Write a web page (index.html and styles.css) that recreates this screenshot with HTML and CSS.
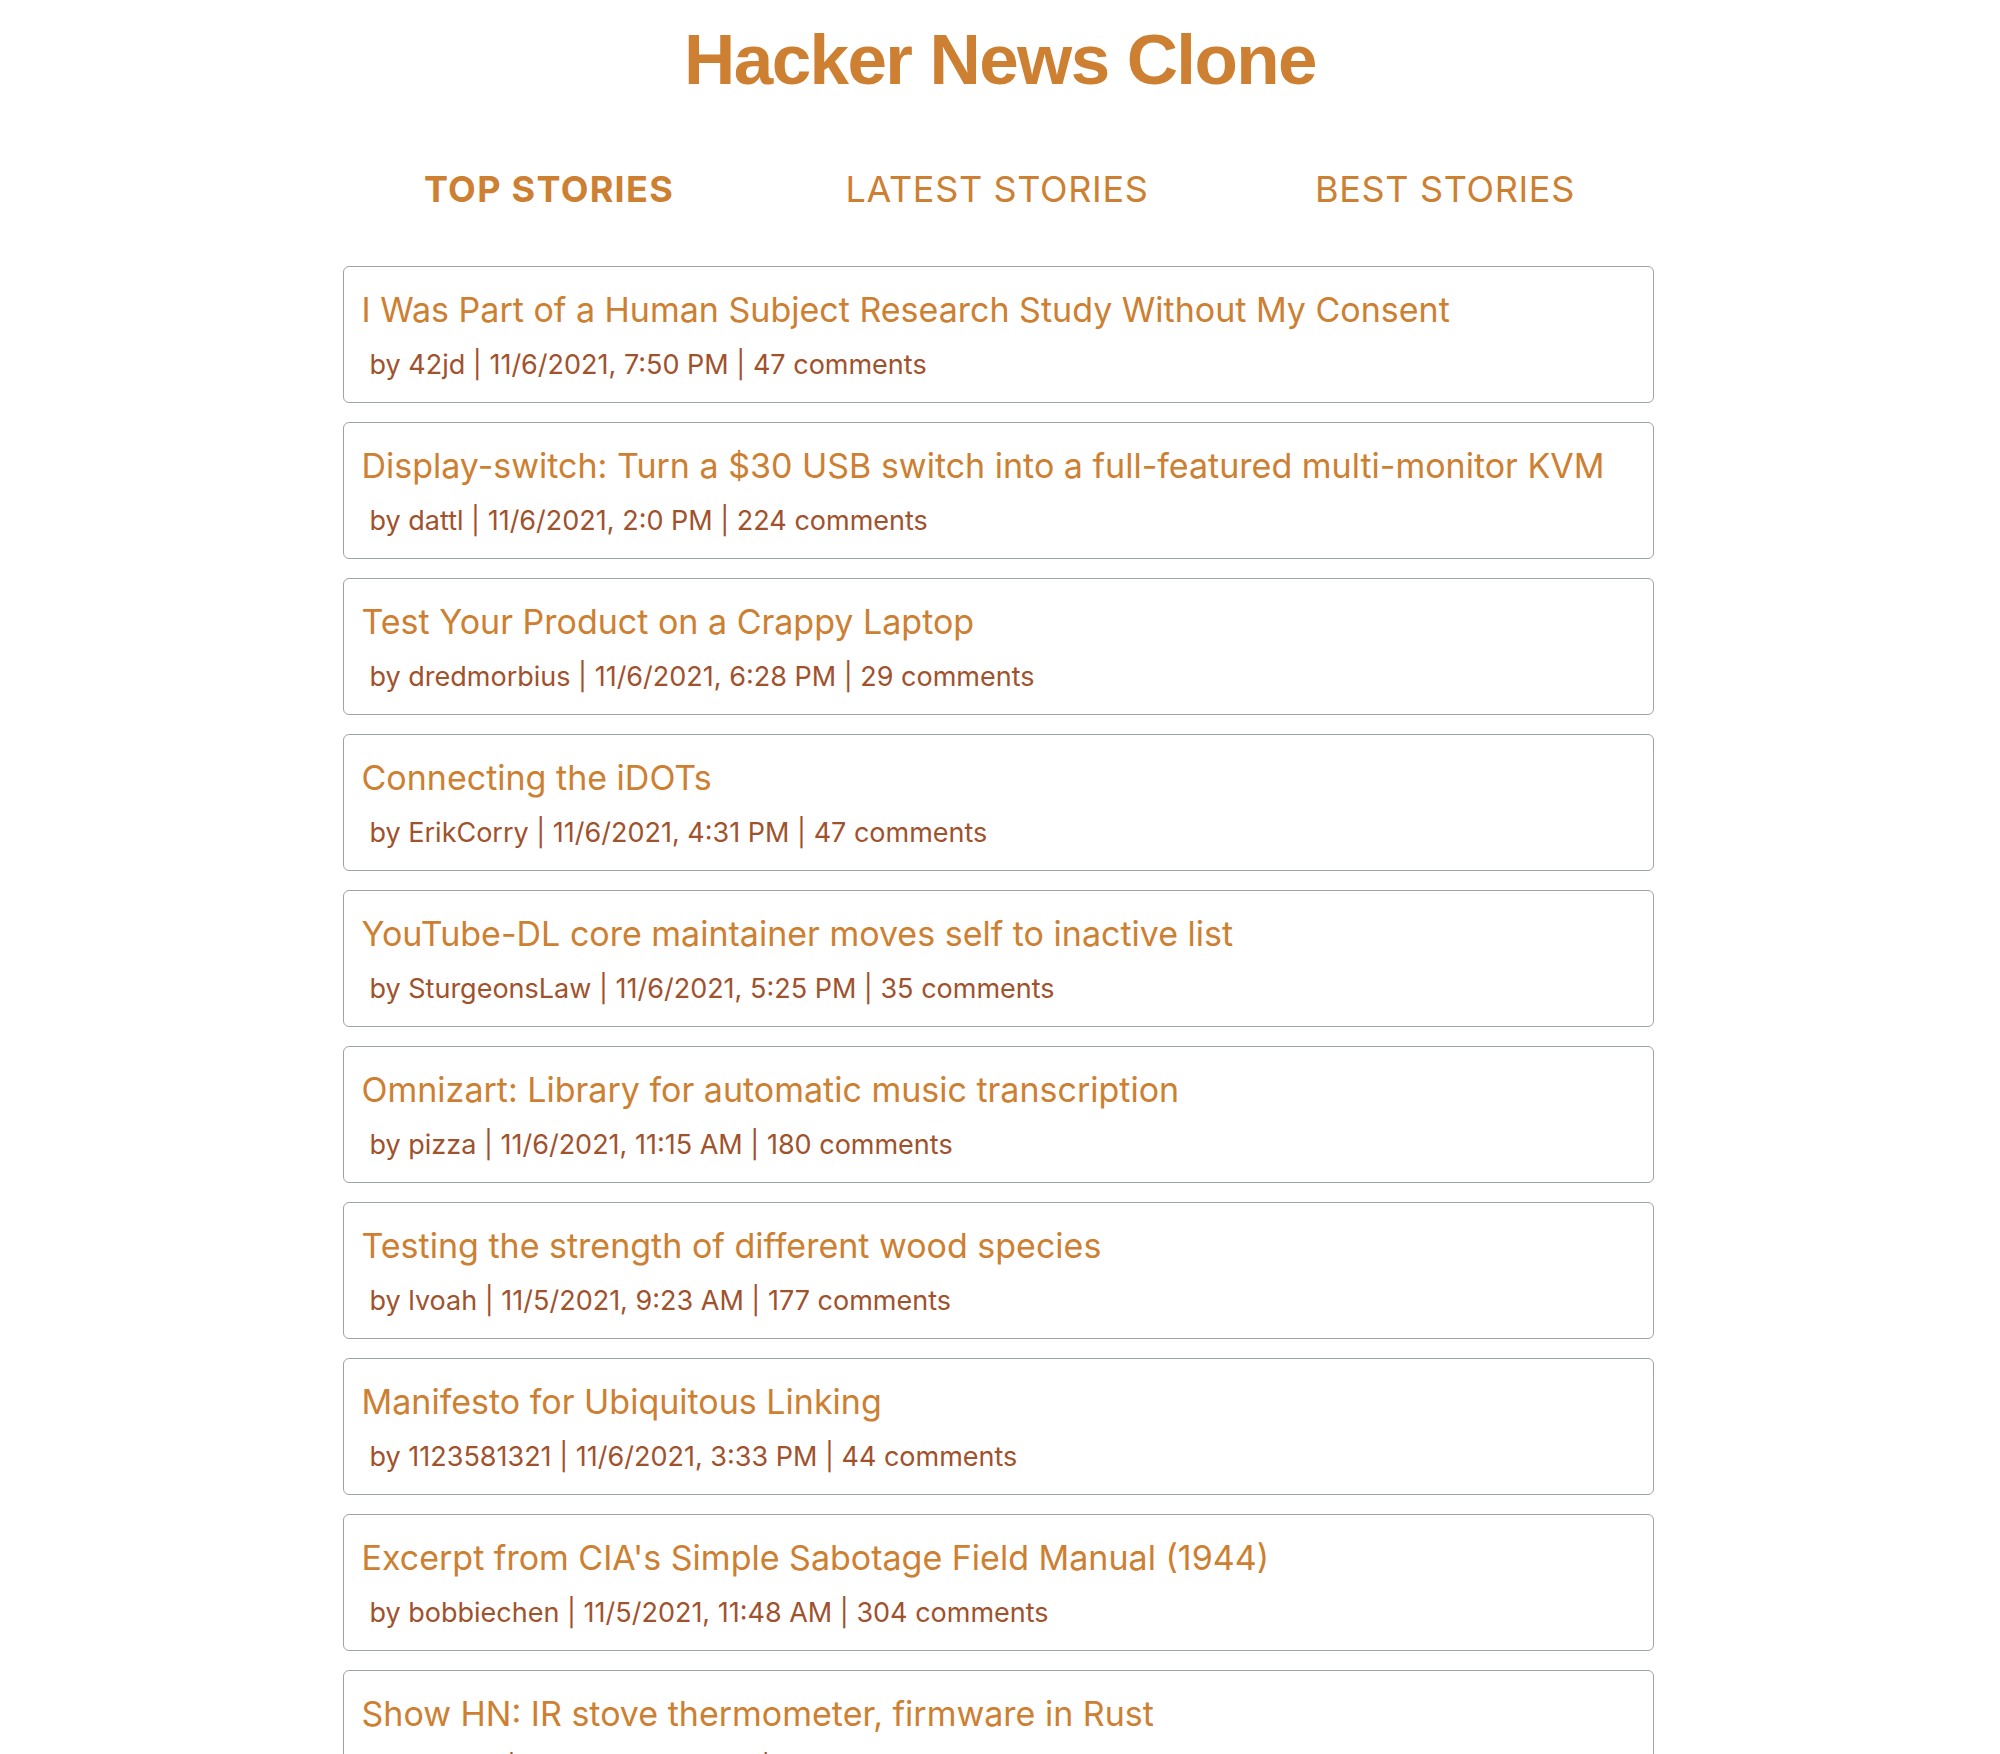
FILE: index.html
```html
<!DOCTYPE html>
<html lang="en">
<head>
<meta charset="utf-8">
<title>Hacker News Clone</title>
<link rel="stylesheet" href="styles.css">
</head>
<body>
<h1 class="site-title">Hacker News Clone</h1>
<nav class="tabs">
  <a class="tab tab-active" href="#">TOP STORIES</a>
  <a class="tab" href="#">LATEST STORIES</a>
  <a class="tab" href="#">BEST STORIES</a>
</nav>
<main class="stories">
  <article class="story">
    <a class="story-title" href="#">I Was Part of a Human Subject Research Study Without My Consent</a>
    <div class="story-meta">by 42jd | 11/6/2021, 7:50 PM | 47 comments</div>
  </article>
  <article class="story">
    <a class="story-title" href="#">Display-switch: Turn a $30 USB switch into a full-featured multi-monitor KVM</a>
    <div class="story-meta">by dattl | 11/6/2021, 2:0 PM | 224 comments</div>
  </article>
  <article class="story">
    <a class="story-title" href="#">Test Your Product on a Crappy Laptop</a>
    <div class="story-meta">by dredmorbius | 11/6/2021, 6:28 PM | 29 comments</div>
  </article>
  <article class="story">
    <a class="story-title" href="#">Connecting the iDOTs</a>
    <div class="story-meta">by ErikCorry | 11/6/2021, 4:31 PM | 47 comments</div>
  </article>
  <article class="story">
    <a class="story-title" href="#">YouTube-DL core maintainer moves self to inactive list</a>
    <div class="story-meta">by SturgeonsLaw | 11/6/2021, 5:25 PM | 35 comments</div>
  </article>
  <article class="story">
    <a class="story-title" href="#">Omnizart: Library for automatic music transcription</a>
    <div class="story-meta">by pizza | 11/6/2021, 11:15 AM | 180 comments</div>
  </article>
  <article class="story">
    <a class="story-title" href="#">Testing the strength of different wood species</a>
    <div class="story-meta">by lvoah | 11/5/2021, 9:23 AM | 177 comments</div>
  </article>
  <article class="story">
    <a class="story-title" href="#">Manifesto for Ubiquitous Linking</a>
    <div class="story-meta">by 1123581321 | 11/6/2021, 3:33 PM | 44 comments</div>
  </article>
  <article class="story">
    <a class="story-title" href="#">Excerpt from CIA's Simple Sabotage Field Manual (1944)</a>
    <div class="story-meta">by bobbiechen | 11/5/2021, 11:48 AM | 304 comments</div>
  </article>
  <article class="story">
    <a class="story-title" href="#">Show HN: IR stove thermometer, firmware in Rust</a>
    <div class="story-meta">by ewuhic | 11/6/2021, 1:12 PM | 38 comments</div>
  </article>
</main>
</body>
</html>
```
FILE: styles.css
```css
html, body {
  margin: 0;
  padding: 0;
  background: #ffffff;
}

body {
  font-family: Inter, "Noto Sans", sans-serif;
  color: #cd7f32;
}

.site-title {
  margin: 24px 0 0;
  font-family: "Liberation Sans", Arial, sans-serif;
  font-weight: 700;
  font-size: 71px;
  line-height: 71px;
  letter-spacing: -1.6px;
  text-align: center;
  color: #cd7f32;
}

.tabs {
  display: grid;
  grid-template-columns: repeat(3, 448px);
  justify-content: center;
  margin: 73px 0 0;
  padding-right: 6px;
}

.tab {
  text-align: center;
  text-decoration: none;
  color: #cd7f32;
  font-size: 36px;
  line-height: 1.2;
  font-weight: 400;
  letter-spacing: 0.65px;
}

.tab-active {
  font-weight: 700;
  letter-spacing: 1.3px;
}

.stories {
  width: 1311px;
  margin: 55px auto 0;
  padding-right: 4px;
  display: flex;
  flex-direction: column;
  gap: 19px;
}

.story {
  border: 1px solid #9ea2ad;
  border-radius: 6px;
  padding: 22px 18px 21px;
  display: flex;
  flex-direction: column;
}

.story-title {
  color: #cd7f32;
  text-decoration: none;
  font-size: 34px;
  line-height: 41px;
  white-space: nowrap;
  margin-bottom: 18px;
}

.story-meta {
  color: #a0522d;
  font-size: 27px;
  line-height: 33px;
  margin-left: 8px;
}
```
